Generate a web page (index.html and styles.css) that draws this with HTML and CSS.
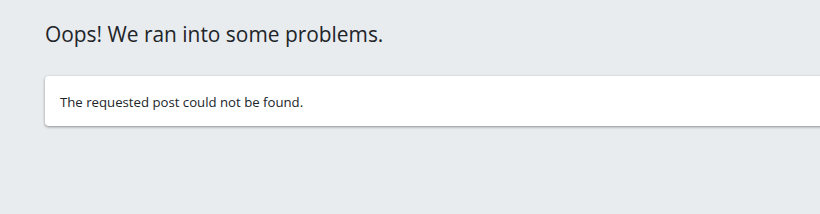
FILE: index.html
```html
<html><head><title>Error</title><link rel="stylesheet" href="styles.css"></head>
<body>
<div class='page'>
  <h1 class='title'>Oops! We ran into some problems.</h1>
  <div class='card'>
    <p class='message'>The requested post could not be found.</p>
  </div>
</div>
</body></html>
```

FILE: styles.css
```css
html, body { margin: 0; padding: 0; overflow: hidden; }
body { background-color: #e9ecef; color: #212529; font-family: 'Open Sans', sans-serif; height: 214px; }
div.page { padding: 20px 0 0 45px; width: 800px; }
h1.title { font-size: 20.9px; font-weight: 400; margin: 0 0 28px 0; line-height: 28px; }
div.card {
  background-color: #ffffff; border-radius: 4px;
  box-shadow: 0 1px 3px rgba(0,0,0,.4);
  padding: 17px 15px 15px 15px; height: 18px;
  }
p.message { margin: 0; font-size: 13.2px; line-height: 18px; }
```
